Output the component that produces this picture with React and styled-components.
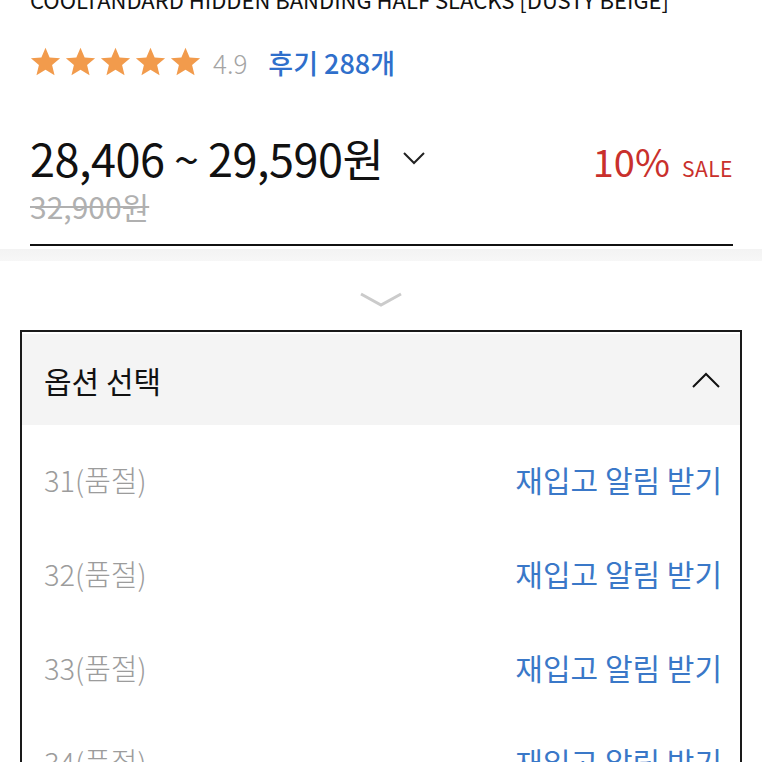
import React from "react";
import styled, { createGlobalStyle } from "styled-components";

const Global = createGlobalStyle`
  html, body {
    margin: 0;
    padding: 0;
    background: #fff;
    font-family: "Noto Sans CJK KR", "Noto Sans", sans-serif;
    overflow: hidden;
  }
`;

const Page = styled.div`
  width: 762px;
  height: 762px;
  overflow: hidden;
  background: #fff;
`;

const Summary = styled.section`
  padding: 0 29px 0 30px;
`;

const Title = styled.h1`
  margin: -15px 0 0;
  font-size: 22px;
  font-weight: 400;
  line-height: 28px;
  color: #111;
  white-space: nowrap;
`;

const RatingRow = styled.div`
  display: flex;
  align-items: center;
  margin-top: 32px;
  height: 34px;
`;

const Stars = styled.div`
  display: flex;
  gap: 4px;
`;

const Score = styled.span`
  margin-left: 12px;
  font-size: 26px;
  font-weight: 300;
  color: #a4a4a4;
`;

const ReviewLink = styled.a`
  margin-left: 21px;
  font-size: 27px;
  font-weight: 500;
  color: #2f6fcb;
  text-decoration: none;
`;

const PriceRow = styled.div`
  display: flex;
  align-items: baseline;
  justify-content: space-between;
  margin-top: 54px;
  height: 50px;
`;

const Price = styled.div`
  display: flex;
  align-items: center;
  gap: 20px;
  font-size: 45px;
  line-height: 50px;
  font-weight: 400;
  color: #111;
  letter-spacing: -0.5px;
`;

const Discount = styled.div`
  display: flex;
  align-items: baseline;
  gap: 12px;
  line-height: 50px;
  color: #c9302c;
`;

const Percent = styled.span`
  font-size: 38px;
  font-weight: 400;
`;

const SaleTag = styled.span`
  font-size: 21px;
  font-weight: 400;
  letter-spacing: 0.5px;
`;

const OldPrice = styled.div`
  margin-top: 6px;
  font-size: 30px;
  line-height: 34px;
  font-weight: 400;
  color: #b0b0b0;
  text-decoration: line-through;
  text-decoration-thickness: 2px;
`;

const Rule = styled.hr`
  margin: 21px 0 0;
  border: 0;
  border-top: 2px solid #111;
`;

const Band = styled.div`
  height: 12px;
  margin-top: 3px;
  background: linear-gradient(to bottom, #f3f3f3, #f7f7f7);
`;

const Fold = styled.div`
  display: flex;
  justify-content: center;
  padding: 31px 0 22px;

  svg {
    display: block;
  }
`;

const OptionBox = styled.div`
  margin: 0 20px;
  border: 2px solid #1a1a1a;
  padding-top: 2px;
`;

const OptionHeader = styled.div`
  display: flex;
  align-items: center;
  justify-content: space-between;
  height: 91px;
  padding: 0 20px 0 22px;
  background: #f4f4f4;
  font-size: 30px;
  font-weight: 400;
  color: #111;
`;

const OptionList = styled.ul`
  list-style: none;
  margin: 0;
  padding: 7px 0 0;
`;

const OptionRow = styled.li`
  display: flex;
  align-items: center;
  justify-content: space-between;
  height: 94px;
  padding: 0 18px 0 22px;
  font-size: 29px;
  font-weight: 300;
`;

const SoldOut = styled.span`
  color: #9c9c9c;
`;

const Restock = styled.a`
  color: #3a78c8;
  text-decoration: none;
  font-size: 30px;
  font-weight: 400;
`;

function Star() {
  return (
    <svg width="31" height="30" viewBox="0 0 24 23">
      <polygon
        points="12,0.5 15.2,8 23.3,8.6 17.1,13.8 19,21.8 12,17.5 5,21.8 6.9,13.8 0.7,8.6 8.8,8"
        fill="#f29b4c"
      />
    </svg>
  );
}

const options = ["31", "32", "33", "34"];

export default function App() {
  return (
    <Page>
      <Global />
      <Summary>
        <Title>COOLTANDARD HIDDEN BANDING HALF SLACKS [DUSTY BEIGE]</Title>
        <RatingRow>
          <Stars>
            {[0, 1, 2, 3, 4].map((i) => (
              <Star key={i} />
            ))}
          </Stars>
          <Score>4.9</Score>
          <ReviewLink>후기 288개</ReviewLink>
        </RatingRow>
        <PriceRow>
          <Price>
            <span>28,406 ~ 29,590원</span>
            <svg width="22" height="14" viewBox="0 0 22 14">
              <polyline points="1,2 11,12 21,2" fill="none" stroke="#222" strokeWidth="2" />
            </svg>
          </Price>
          <Discount>
            <Percent>10%</Percent>
            <SaleTag>SALE</SaleTag>
          </Discount>
        </PriceRow>
        <OldPrice>32,900원</OldPrice>
        <Rule />
      </Summary>
      <Band />
      <Fold>
        <svg width="44" height="16" viewBox="0 0 44 16">
          <polyline points="2,2 22,13 42,2" fill="none" stroke="#cbcbcb" strokeWidth="3" />
        </svg>
      </Fold>
      <OptionBox>
        <OptionHeader>
          <span>옵션 선택</span>
          <svg width="28" height="16" viewBox="0 0 28 16">
            <polyline points="1,15 14,2 27,15" fill="none" stroke="#111" strokeWidth="2" />
          </svg>
        </OptionHeader>
        <OptionList>
          {options.map((size) => (
            <OptionRow key={size}>
              <SoldOut>{size}(품절)</SoldOut>
              <Restock>재입고 알림 받기</Restock>
            </OptionRow>
          ))}
        </OptionList>
      </OptionBox>
    </Page>
  );
}
